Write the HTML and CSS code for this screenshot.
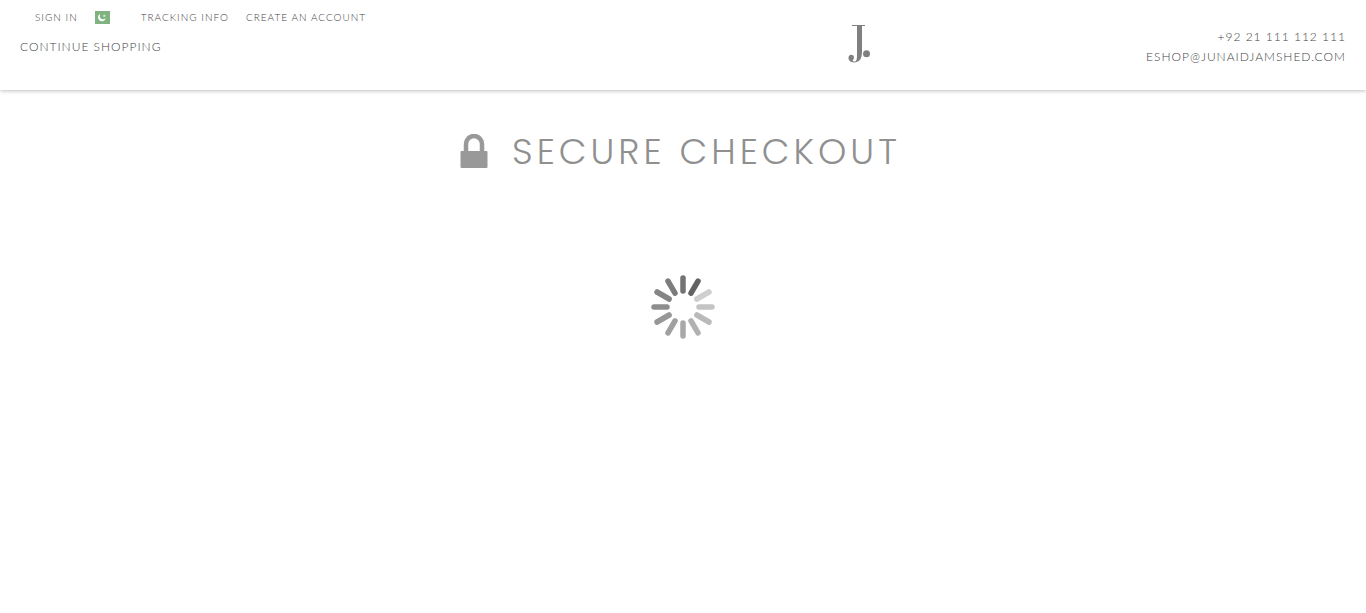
FILE: index.html
```html
<!DOCTYPE html>
<html lang="en">
<head>
<meta charset="utf-8">
<title>Secure Checkout</title>
<link rel="stylesheet" href="styles.css">
</head>
<body>
<header class="header">
  <div class="header-left">
    <nav class="top-links" aria-label="Account">
      <a href="#signin">Sign In</a>
      <a class="flag-link" href="#country" aria-label="Pakistan">
        <svg class="flag" viewBox="0 0 15 13" aria-hidden="true">
          <rect width="15" height="13" fill="#80b380"/>
          <path d="M5.600 2.800C3.500 3.400 2.600 5.500 3.300 7.500C4 9.700 6.300 10.600 8.300 9.900C9.700 9.400 10.500 8.300 10.700 7C9.800 8.200 8.600 8.600 7.200 8.200C5.400 7.600 4.500 6 4.800 4.500C4.900 3.800 5.200 3.300 5.600 2.800Z" fill="#fff"/>
          <path d="M9.300 3.200l.5 1 1.100.1-.8.8.2 1.100-1-.6-1 .6.200-1.100-.8-.8 1.100-.1z" fill="#dcebdc"/>
        </svg>
      </a>
      <a class="tracking-link" href="#tracking">Tracking Info</a>
      <a href="#register">Create an Account</a>
    </nav>
    <a class="continue-link" href="#shop">Continue Shopping</a>
  </div>
  <a class="logo-link" href="#home" aria-label="J. home">
    <svg class="logo" viewBox="0 0 22 38" aria-hidden="true">
      <path d="M4 0H17V1H14V27C14 34 11 37.500 6 37.500C2.500 37.500 .5 35.500 .5 32.800C.5 30.900 1.700 29.700 3.300 29.700C5 29.700 6 30.900 6 32.400C6 34.100 4.700 34.700 4.700 35.500C4.700 36.200 5.400 36.600 6.300 36.600C8.500 36.600 9 34.500 9 30V1H4Z" fill="#808080"/>
      <circle cx="18.500" cy="28.700" r="3.500" fill="#808080"/>
    </svg>
  </a>
  <address class="contact">
    <a href="tel:+9221111112111">+92 21 111 112 111</a>
    <a href="mailto:eshop@junaidjamshed.com">eshop@junaidjamshed.com</a>
  </address>
</header>
<main class="main">
  <h1 class="title">
    <svg class="lock" viewBox="0 0 28 36" aria-hidden="true">
      <path d="M6 17V10A8 8 0 0 1 22 10V17" fill="none" stroke="#999" stroke-width="4.500"/>
      <rect x=".5" y="17" width="27" height="17" rx="1" fill="#999"/>
    </svg>
    <span>Secure Checkout</span>
  </h1>
  <svg class="spinner" viewBox="-32 -32 64 64" role="img" aria-label="Loading">
    <g stroke-width="5.500" stroke-linecap="round">
      <path d="M0-16V-29" stroke="#737373"/>
      <path d="M0-16V-30" stroke="#636363" transform="rotate(30)"/>
      <path d="M0-16V-30" stroke="#cfcfcf" transform="rotate(60)"/>
      <path d="M0-16V-29" stroke="#c4c4c4" transform="rotate(90)"/>
      <path d="M0-16V-30" stroke="#bababa" transform="rotate(120)"/>
      <path d="M0-16V-30" stroke="#b1b1b1" transform="rotate(150)"/>
      <path d="M0-16V-29" stroke="#a9a9a9" transform="rotate(180)"/>
      <path d="M0-16V-30" stroke="#a0a0a0" transform="rotate(210)"/>
      <path d="M0-16V-30" stroke="#979797" transform="rotate(240)"/>
      <path d="M0-16V-29" stroke="#8e8e8e" transform="rotate(270)"/>
      <path d="M0-16V-30" stroke="#858585" transform="rotate(300)"/>
      <path d="M0-16V-30" stroke="#7c7c7c" transform="rotate(330)"/>
    </g>
  </svg>
</main>
</body>
</html>
```
FILE: styles.css
```css
* {
  box-sizing: border-box;
}

body {
  margin: 0;
  background: #fff;
  color: #444;
  font-family: Lato, "Liberation Sans", sans-serif;
  font-size: 12px;
  font-weight: 300;
  line-height: 20px;
  letter-spacing: 1px;
  text-transform: uppercase;
}

a {
  color: inherit;
  text-decoration: none;
}

.header {
  display: grid;
  grid-template-columns: 97fr 50fr 47fr;
  padding-bottom: 23px;
  box-shadow: 0 1px 4px rgba(0, 0, 0, 0.25);
}

.header-left {
  padding: 7px 0 0 20px;
}

.top-links {
  display: flex;
  align-items: center;
  gap: 17px;
  margin-bottom: 10px;
  padding-left: 15px;
  font-size: 10px;
}

.flag-link {
  display: flex;
}

.flag {
  width: 15px;
  height: 13px;
}

.tracking-link {
  margin-left: 14px;
}

.logo-link {
  display: flex;
  justify-content: center;
  padding-top: 25px;
}

.logo {
  width: 22px;
  height: 38px;
}

.contact {
  display: flex;
  flex-direction: column;
  align-items: flex-end;
  padding: 27px 20px 0 0;
  font-style: normal;
}

.main {
  display: flex;
  flex-direction: column;
  align-items: center;
  padding-top: 35px;
}

.title {
  display: flex;
  align-items: center;
  gap: 24px;
  margin: 0 0 96px;
  padding-right: 5px;
  color: #909090;
  font-family: Poppins, Inter, sans-serif;
  font-size: 36px;
  font-weight: 300;
  line-height: 54px;
  letter-spacing: 4px;
}

.lock {
  width: 28px;
  height: 36px;
}

.spinner {
  width: 64px;
  height: 64px;
}
```
